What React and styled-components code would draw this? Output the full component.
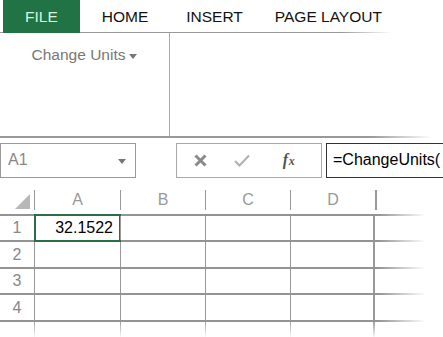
import styled, { createGlobalStyle } from 'styled-components';

const Global = createGlobalStyle`
  body {
    margin: 0;
    background: #fff;
    font-family: "Liberation Sans", Arial, sans-serif;
    overflow: hidden;
  }
`

const Page = styled.div`
  width: 443px;
  height: 337px;
  overflow: hidden;
  display: flex;
  flex-direction: column;
`

const TabBar = styled.div`
  display: flex;
  height: 32px;
  padding-left: 3px;
  border-bottom: 1px solid;
  border-image: linear-gradient(to right, #999 0, #999 340px, rgba(153,153,153,0) 392px) 1;
`

const Tab = styled.div`
  display: flex;
  align-items: center;
  height: 33px;
  margin-left: ${p => p.$gap || 0}px;
  padding: 0 ${p => p.$pad || 0}px;
  font-size: 15.5px;
  color: ${p => p.$active ? '#d9f2dc' : '#111'};
  background: ${p => p.$active ? '#217346' : 'transparent'};
  padding-top: 1px;
  box-sizing: border-box;
`

const Ribbon = styled.div`
  display: flex;
  height: 103px;
  border-bottom: 2px solid;
  border-image: linear-gradient(to right, #999 0, #999 370px, rgba(153,153,153,0) 432px) 1;
`

const Group = styled.div`
  width: 170px;
  border-right: 1px solid #aaa;
  display: flex;
  justify-content: center;
  padding-top: 13px;
  box-sizing: border-box;
`

const Dropdown = styled.div`
  display: flex;
  align-items: center;
  gap: 4px;
  height: 18px;
  font-size: 15.5px;
  color: #777;
`

const Caret = styled.svg`
  width: 8px;
  height: 5px;
  margin-top: 2px;
  fill: ${p => p.$color || '#777'};
`

const FormulaBar = styled.div`
  display: flex;
  margin-top: 5px;
  height: 35px;
`

const NameBox = styled.div`
  width: 136px;
  box-sizing: border-box;
  border: 1px solid #9a9a9a;
  display: flex;
  align-items: center;
  justify-content: space-between;
  padding: 0 9px 0 7px;
  font-size: 16px;
  color: #888;
`

const FnBox = styled.div`
  width: 146px;
  margin-left: 40px;
  box-sizing: border-box;
  border: 1px solid #aaa;
  display: flex;
  align-items: center;
  padding-left: 16px;
`

const FnButton = styled.div`
  width: ${p => p.$w}px;
  display: flex;
  align-items: center;
  justify-content: center;
`

const Fx = styled.span`
  font-family: "Liberation Serif", "Times New Roman", serif;
  font-style: italic;
  font-weight: bold;
  font-size: 16px;
  color: #555;
  letter-spacing: 0.5px;
  small {
    font-size: 12px;
  }
`

const Input = styled.div`
  flex: 1;
  margin-left: 4px;
  border: 1px solid #333;
  border-right: none;
  display: flex;
  align-items: center;
  padding-left: 6px;
  font-size: 16px;
  color: #000;
  white-space: nowrap;
  overflow: hidden;
`

const HeaderRow = styled.div`
  display: flex;
  height: 36px;
  align-items: flex-end;
  padding-bottom: 4px;
  box-sizing: border-box;
`

const Corner = styled.div`
  width: 34px;
  height: 20px;
  display: flex;
  align-items: flex-end;
  justify-content: flex-end;
  padding: 0 4px 1px 0;
  box-sizing: border-box;
`

const ColHead = styled.div`
  width: ${p => p.$w}px;
  height: 20px;
  box-sizing: border-box;
  border-left: ${p => p.$thick ? 2 : 1}px solid #999;
  text-align: center;
  line-height: 20px;
  font-size: 16px;
  color: #999;
`

const Row = styled.div`
  display: flex;
  height: ${p => p.$h || 24.6}px;
`

const RowHead = styled.div`
  width: 34px;
  display: flex;
  align-items: center;
  justify-content: center;
  font-size: 16px;
  color: #888;
`

const Cell = styled.div`
  position: relative;
  width: ${p => p.$w}px;
  box-sizing: border-box;
  border-left: 1px solid #999;
  border-right: ${p => p.$last ? '2px solid #999' : 'none'};
  display: flex;
  align-items: center;
  justify-content: flex-end;
  padding-right: 7px;
  font-size: 16px;
  color: #000;

  ${p => p.$selected && `
    &::after {
      content: '';
      position: absolute;
      left: -1px;
      right: -1px;
      top: -2px;
      bottom: -2px;
      border: 2px solid #2a6e47;
    }
  `}
`

const TailCell = styled(Cell)`
  border-image: linear-gradient(to bottom, #999, rgba(153,153,153,0)) 1;
`

const HLine = styled.div`
  height: 2px;
  background: linear-gradient(to right, #939393 0, #939393 378px, rgba(147,147,147,0) 426px);
`

const widths = [86, 85, 85, 85];
const letters = ['A', 'B', 'C', 'D'];
const data = {'1-0': '32.1522'};

export default function App() {
  return (
    <Page>
      <Global />
      <TabBar>
        <Tab $active $pad={22}>FILE</Tab>
        <Tab $gap={22}>HOME</Tab>
        <Tab $gap={38}>INSERT</Tab>
        <Tab $gap={32}>PAGE LAYOUT</Tab>
      </TabBar>
      <Ribbon>
        <Group>
          <Dropdown>
            Change Units
            <Caret viewBox="0 0 8 5"><polygon points="0,0 8,0 4,5" /></Caret>
          </Dropdown>
        </Group>
      </Ribbon>
      <FormulaBar>
        <NameBox>
          A1
          <Caret viewBox="0 0 8 5" $color="#777"><polygon points="0,0 8,0 4,5" /></Caret>
        </NameBox>
        <FnBox>
          <FnButton $w={14}>
            <svg width="13" height="13" viewBox="0 0 13 13">
              <path d="M1.5 1.5 L11.5 11.5 M11.5 1.5 L1.5 11.5" stroke="#8a8a8a" strokeWidth="3" />
            </svg>
          </FnButton>
          <FnButton $w={70}>
            <svg width="16" height="13" viewBox="0 0 16 13">
              <path d="M1 7 L5.5 11.5 L15 1.5" stroke="#b0b0b0" strokeWidth="2" fill="none" />
            </svg>
          </FnButton>
          <FnButton $w={24}>
            <Fx>f<small>x</small></Fx>
          </FnButton>
        </FnBox>
        <Input>=ChangeUnits(</Input>
      </FormulaBar>
      <HeaderRow>
        <Corner>
          <svg width="15" height="15" viewBox="0 0 15 15">
            <polygon points="15,0 15,15 0,15" fill="#b8b8b8" />
          </svg>
        </Corner>
        {letters.map((l, i) => <ColHead key={l} $w={widths[i]}>{l}</ColHead>)}
        <ColHead $w={20} $thick />
      </HeaderRow>
      <HLine />
      {[1, 2, 3, 4].map(r => (
        <div key={r}>
          <Row>
            <RowHead>{r}</RowHead>
            {widths.map((w, c) => (
              <Cell key={c} $w={w} $last={c === 3} $selected={r === 1 && c === 0}>
                {data[`${r}-${c}`]}
              </Cell>
            ))}
          </Row>
          <HLine />
        </div>
      ))}
      <Row $h={15}>
        <RowHead />
        {widths.map((w, c) => <TailCell key={c} $w={w} $last={c === 3} />)}
      </Row>
    </Page>
  );
}
